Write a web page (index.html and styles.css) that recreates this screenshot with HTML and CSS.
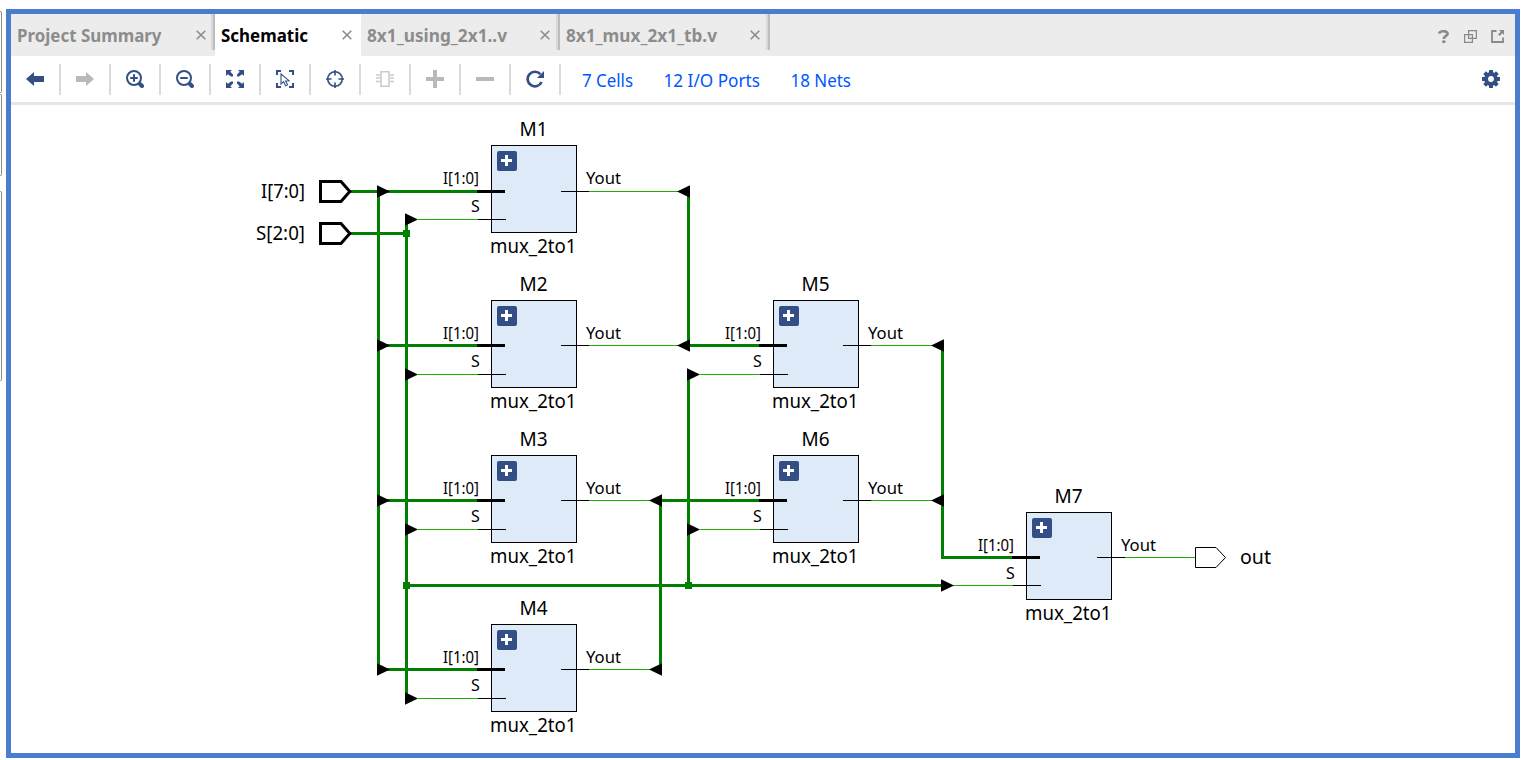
FILE: index.html
```
<!DOCTYPE html>
<html lang="en">
<head>
<meta charset="utf-8">
<title>Schematic</title>
<link rel="stylesheet" href="styles.css">
</head>
<body>
<div class="app">
  <aside class="edge"><i class="edge-a"></i><i class="edge-b"></i><i class="edge-c"></i></aside>
  <main class="window">
    <nav class="tabs">
      <div class="tab tab-summary"><svg class="label" width="155" height="30"><text x="0" y="21" textLength="144.5" lengthAdjust="spacingAndGlyphs">Project Summary</text></svg><svg class="close" viewBox="0 0 10 10"><path d="M.7.7l8.6 8.6M9.3.7L.7 9.3"/></svg></div>
      <div class="tab tab-active"><svg class="label" width="95" height="30"><text x="0" y="21" textLength="87" lengthAdjust="spacingAndGlyphs">Schematic</text></svg><svg class="close" viewBox="0 0 10 10"><path d="M.7.7l8.6 8.6M9.3.7L.7 9.3"/></svg></div>
      <div class="tab tab-using"><svg class="label" width="150" height="30"><text x="0" y="21" textLength="140" lengthAdjust="spacingAndGlyphs">8x1_using_2x1..v</text></svg><svg class="close" viewBox="0 0 10 10"><path d="M.7.7l8.6 8.6M9.3.7L.7 9.3"/></svg></div>
      <div class="tab tab-tb"><svg class="label" width="160" height="30"><text x="0" y="21" textLength="151" lengthAdjust="spacingAndGlyphs">8x1_mux_2x1_tb.v</text></svg><svg class="close" viewBox="0 0 10 10"><path d="M.7.7l8.6 8.6M9.3.7L.7 9.3"/></svg></div>
      <div class="window-tools">
        <svg class="help" width="12" height="13" viewBox="0 0 12 13"><path d="M1.2 3.6C1.6.6 9.6.3 9.6 3.7 9.6 6 5.8 5.8 5.8 9" fill="none" stroke="#8a8a8a" stroke-width="2.7"/><path d="M4.2 10.4h3.2V13H4.2z" fill="#8a8a8a"/></svg>
        <svg width="13" height="13" viewBox="0 0 13 13" fill="none" stroke="#8a8a8a" stroke-width="1.3"><path d="M4.6.6h7.8v7.8H4.6z"/><path d="M4.6 4.6h-4v7.8h7.8v-4" /><path d="M4.6 4.6h3.8v3.8"/></svg>
        <svg width="13" height="13" viewBox="0 0 13 13"><path d="M5.5 1H1v11h11V7.5" fill="none" stroke="#8a8a8a" stroke-width="1.8"/><path d="M8 0h5v5l-1.7-1.7L8.5 6 7 4.6l2.8-2.9z" fill="#8a8a8a"/></svg>
      </div>
    </nav>
    <div class="toolbar">
      <span class="tool"><svg viewBox="0 0 18 18"><path d="M0 9l8-7v4h10v6H8v4z"/></svg></span>
      <span class="tool off"><svg viewBox="0 0 18 18"><path d="M18 9l-8-7v4H0v6h10v4z"/></svg></span>
      <span class="tool"><svg viewBox="0 0 18 18"><circle cx="8" cy="8" r="7" class="ln"/><path d="M8 4.2v7.6M4.2 8h7.6" class="ln"/><path d="M14 14l2 2" class="knob"/></svg></span>
      <span class="tool"><svg viewBox="0 0 18 18"><circle cx="8" cy="8" r="7" class="ln"/><path d="M4.2 8h7.6" class="ln"/><path d="M14 14l2 2" class="knob"/></svg></span>
      <span class="tool"><svg viewBox="0 0 18 18"><path d="M0 0h6L4.3 1.8 7 4.6v2H5L1.9 4.2 0 6zM18 0h-6l1.7 1.8L11 4.6v2h2l3.1-2.4L18 6zM0 18h6l-1.7-1.8L7 13.4v-2H5l-3.1 2.4L0 12zM18 18h-6l1.7-1.8-2.7-2.8v-2h2l3.1 2.4L18 12z"/></svg></span>
      <span class="tool"><svg viewBox="0 0 18 18"><path d="M5 1H1v4M13 1h4v4M5 17H1v-4M13 17h4v-4" class="ln"/><path d="M5 4v10l2.6-2.3 2 4.1 2-1-2-3.8 3.5-.3z" class="thin"/></svg></span>
      <span class="tool"><svg viewBox="0 0 18 18"><circle cx="9" cy="9" r="7.3" class="mid"/><path d="M9 0v5.5M9 12.5V18M0 9h5.5M12.5 9H18" class="mid"/></svg></span>
      <span class="tool pale"><svg viewBox="0 0 18 18"><path d="M5 1.8h8v14.4H5zM0 5h4M0 11.5h4M14 5h4M14 11.5h4M0 8h4M14 8h4" class="mid"/></svg></span>
      <span class="tool off"><svg viewBox="0 0 18 18"><path d="M7 0h4v7h7v4h-7v7H7v-7H0V7h7z"/></svg></span>
      <span class="tool off"><svg viewBox="0 0 18 18"><path d="M0 7h18v4H0z"/></svg></span>
      <span class="tool"><svg viewBox="0 0 18 18"><path d="M14.4 4.2A7.3 7.3 0 1 0 15.6 12" fill="none" stroke="#334f85" stroke-width="2.7"/><path d="M18 1v7h-7z"/></svg></span>
      <svg class="stats" width="280" height="30"><text x="0" y="23" textLength="51" lengthAdjust="spacingAndGlyphs">7 Cells</text><text x="81.5" y="23" textLength="96.5" lengthAdjust="spacingAndGlyphs">12 I/O Ports</text><text x="208.5" y="23" textLength="60.5" lengthAdjust="spacingAndGlyphs">18 Nets</text></svg>
      <svg class="gear" viewBox="-9 -9 18 18"><path d="M-2-9h4v18h-4zM-9-2H9v4H-9z"/><path d="M-2-9h4v18h-4zM-9-2H9v4H-9z" transform="rotate(45)"/><circle r="4.9" class="ring"/></svg>
    </div>
    <svg class="schematic" viewBox="11 105 1504 648">
      <defs>
        <path id="right" d="M-1.5-6.2L11.5 0-1.5 6.2z"/>
        <path id="left" d="M1.5-6.2L-11.5 0 1.5 6.2z"/>
        <g id="cell">
          <rect x=".5" y=".5" width="85" height="87" class="box"/>
          <rect x="6" y="6" width="20" height="20" rx="2" class="expand"/>
          <path d="M15.5 10v11M10 15.5h11" class="plus"/>
          <text x="-48" y="39" textLength="36" lengthAdjust="spacingAndGlyphs" class="pin">I[1:0]</text>
          <text x="-20" y="67" class="pin">S</text>
          <text x="95" y="39" textLength="35" lengthAdjust="spacingAndGlyphs" class="pin">Yout</text>
          <text x="-1" y="108" textLength="86.5" lengthAdjust="spacingAndGlyphs" class="name">mux_2to1</text>
        </g>
      </defs>

      <path class="bus" d="M349 191.5H478M349 233.5H407M378.5 191V669.5M406.5 219V698.5M378 345.5H478M378 500.5H478M378 669.5H478
        M406 585.5H942M688.5 191V347M688 345.5H760M688.5 374V586M660.5 500V669.5M660 500.5H760M942.5 345V557.5M941 557.5H1013"/>
      <path class="net" d="M418 219.5H478M418 374.5H478M418 529.5H478M418 698.5H478M700 374.5H760M700 529.5H760M953 585.5H1013
        M589 191.5H678M589 345.5H678M589 500.5H650M589 669.5H650M871 345.5H932M871 500.5H932M1124 557.5H1195"/>
      <path class="joint" d="M403 230h7v7h-7zM403 582h7v7h-7zM685 582h7v7h-7z"/>

      <use href="#cell" x="491" y="145"/><use href="#cell" x="491" y="300"/><use href="#cell" x="491" y="455"/><use href="#cell" x="491" y="624"/>
      <use href="#cell" x="773" y="300"/><use href="#cell" x="773" y="455"/><use href="#cell" x="1026" y="512"/>

      <path class="stub-bus" d="M477 191.5h28M477 345.5h28M477 500.5h28M477 669.5h28M759 345.5h28M759 500.5h28M1012 557.5h28"/>
      <path class="stub" d="M478 219.5h28M478 374.5h28M478 529.5h28M478 698.5h28M760 374.5h28M760 529.5h28M1013 585.5h28
        M561 191.5h28M561 345.5h28M561 500.5h28M561 669.5h28M843 345.5h28M843 500.5h28M1097 557.5h28"/>

      <use href="#right" x="378.5" y="191.5"/><use href="#right" x="378.5" y="345.5"/><use href="#right" x="378.5" y="500.5"/><use href="#right" x="378.5" y="669.5"/>
      <use href="#right" x="406.5" y="219.5"/><use href="#right" x="406.5" y="374.5"/><use href="#right" x="406.5" y="529.5"/><use href="#right" x="406.5" y="698.5"/>
      <use href="#right" x="688.5" y="374.5"/><use href="#right" x="688.5" y="529.5"/><use href="#right" x="942.5" y="585.5"/>
      <use href="#left" x="688.5" y="191.5"/><use href="#left" x="688.5" y="345.5"/><use href="#left" x="660.5" y="500.5"/><use href="#left" x="660.5" y="669.5"/>
      <use href="#left" x="942.5" y="345.5"/><use href="#left" x="942.5" y="500.5"/>

      <path class="port" d="M320.5 181.5h20.5l8.8 10-8.8 10h-20.5zM320.5 223.5h20.5l8.8 10-8.8 10h-20.5z"/>
      <path class="port-out" d="M1195.5 547.5h20.5l9.5 10-9.5 10h-20.5z"/>

      <g class="name">
        <text x="261" y="198" textLength="44" lengthAdjust="spacingAndGlyphs">I[7:0]</text>
        <text x="256" y="240" textLength="49" lengthAdjust="spacingAndGlyphs">S[2:0]</text>
        <text x="1240" y="564" textLength="31" lengthAdjust="spacingAndGlyphs">out</text>
        <g class="title">
          <text x="519.5" y="135.5">M1</text><text x="519.5" y="290.5">M2</text><text x="519.5" y="445.5">M3</text><text x="519.5" y="614.5">M4</text>
          <text x="801.5" y="290.5">M5</text><text x="801.5" y="445.5">M6</text><text x="1054.5" y="502.5">M7</text>
        </g>
      </g>
    </svg>
  </main>
</div>
</body>
</html>
```
FILE: styles.css
```
* { box-sizing: border-box; }
body { margin: 0; background: #fff; font-family: "Noto Sans", "Open Sans", sans-serif; overflow: hidden; }
.app { display: flex; height: 760px; }
.edge { width: 6px; padding-top: 11px; display: flex; flex-direction: column; }
.edge i { width: 2px; border: 1px solid #8c8c8c; border-left: 0; border-radius: 0 2px 2px 0; }
.edge-a { height: 82px; }
.edge-b { height: 82px; margin-top: 1px; }
.edge-c { height: 190px; margin-top: 15px; }
.window { width: 1514px; height: 749px; margin-top: 9px; border: 5px solid #4a7dcf; display: flex; flex-direction: column; }

.tabs { height: 42px; background: #ececec; display: flex; }
.tab { display: flex; align-items: flex-start; justify-content: space-between; padding: 7px 9px 0 6px; fill: #8c8c8c; background: linear-gradient(90deg, #d8d8d8 50%, #bdbdbd 50%) right top / 4px 36px no-repeat; }
.label { font-size: 17.8px; font-weight: 700; overflow: visible; }
.close { width: 10px; height: 10px; margin-top: 9px; fill: none; stroke: #8c8c8c; stroke-width: 1.6; }
.tab-summary { width: 204px; }
.tab-active { width: 146px; background: #fff; fill: #000; }
.tab-using { width: 199px; padding-right: 10px; }
.tab-tb { width: 210px; padding-right: 10px; }
.window-tools { margin-left: auto; padding: 16px 11px 0 0; display: flex; gap: 14px; }

.toolbar { height: 49px; border-bottom: 3px solid #e6e6e6; display: flex; align-items: center; }
.tool { width: 50px; height: 31px; border-right: 2px solid #dadada; display: flex; align-items: center; justify-content: center; fill: #334f85; stroke: none; color: #334f85; }
.tool svg { width: 18px; height: 18px; }
.off { fill: #b9b9b9; color: #b9b9b9; }
.pale { color: #cbcbcb; }
.ln { fill: none; stroke: currentColor; stroke-width: 2; }
.mid { fill: none; stroke: currentColor; stroke-width: 1.6; }
.thin { fill: none; stroke: currentColor; stroke-width: 1.1; }
.knob { fill: none; stroke: currentColor; stroke-width: 4; stroke-linecap: round; }
.stats { margin-left: 21px; fill: #0055ff; font-size: 18.4px; }
.gear { width: 18px; height: 18px; margin: 0 15px 0 auto; fill: #334f85; }
.ring { fill: #fff; stroke: #334f85; stroke-width: 4; }

.schematic { width: 1504px; height: 648px; display: block; }
.bus { fill: none; stroke: #008000; stroke-width: 3; }
.net { fill: none; stroke: #1eae00; stroke-width: 1; }
.joint { fill: #008000; }
.box { fill: #deeaf8; stroke: #000; stroke-width: 1; }
.expand { fill: #334f85; }
.plus { stroke: #fff; stroke-width: 3; }
.pin { font-size: 16px; }
.name { font-size: 19.5px; }
.title { font-size: 19px; }
.stub-bus { stroke: #000; stroke-width: 3; }
.stub { stroke: #000; stroke-width: 1; }
.port { fill: #fff; stroke: #000; stroke-width: 3; }
.port-out { fill: #fff; stroke: #000; stroke-width: 1; }
```
